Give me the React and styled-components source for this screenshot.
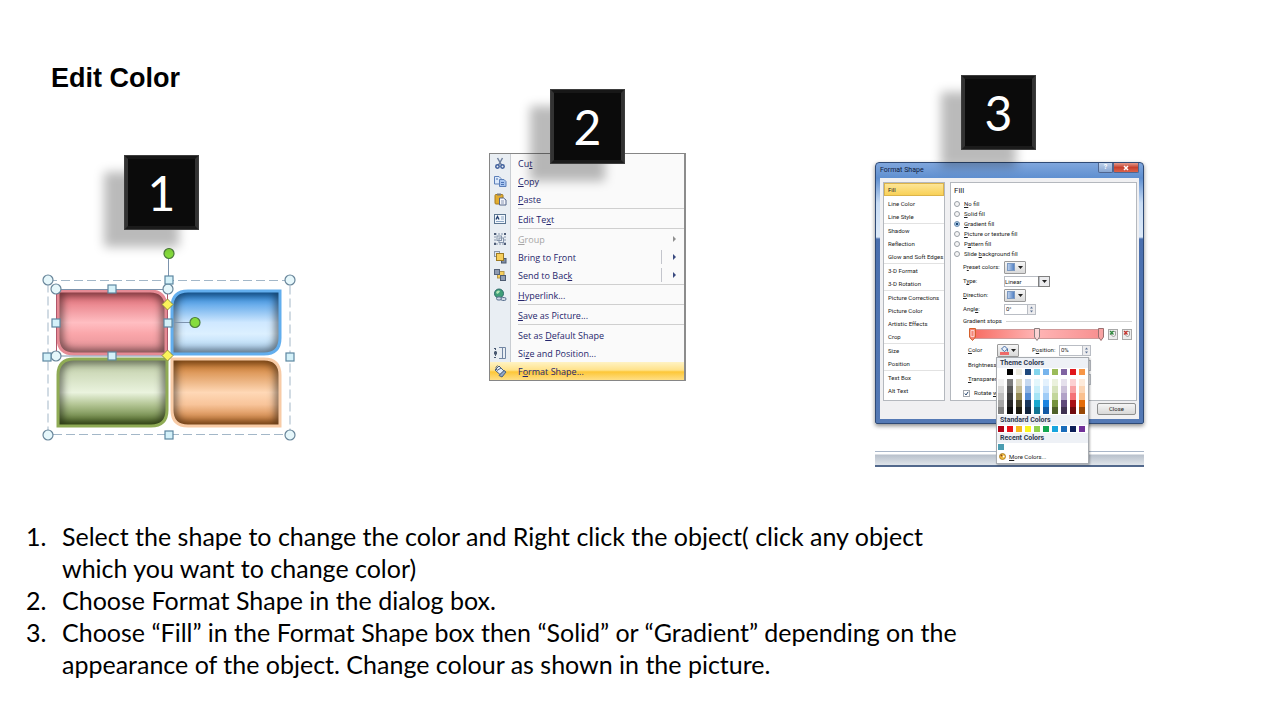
import React from 'react';
import styled, { createGlobalStyle } from 'styled-components';

const GlobalStyle = createGlobalStyle`
  * {
    box-sizing: border-box;
  }

  body {
    margin: 0;
    background: #fff;
    color: #000;
    font-family: Lato, 'Liberation Sans', sans-serif;
  }

  button, input, select {
    margin: 0;
    padding: 0;
    font: inherit;
    color: inherit;
  }

  svg {
    display: block;
    flex: none;
  }
`;

/* ---------- slide ---------- */

const Steps = styled.div`
  display: grid;
  grid-template-columns: 447fr 386fr 405fr;
  align-items: start;
  padding-left: 42px;
`;

const Step = styled.section`
  padding-top: ${({ $top }) => $top}px;
`;

const Title = styled.h1`
  margin: 0 0 61px 9px;
  font-family: 'Liberation Sans', Arial, sans-serif;
  font-size: 27px;
  line-height: 32px;
`;

const Badge = styled.div`
  position: relative;
  z-index: 1;
  display: flex;
  align-items: center;
  justify-content: center;
  width: 75px;
  height: 75px;
  margin: 0 0 ${({ $gap }) => $gap}px ${({ $indent }) => $indent}px;
  border: 4px solid;
  border-color: #171717 #333 #1b1b1b #333;
  outline: 1px solid #3d3d3d;
  outline-offset: -1px;
  background: #0b0b0b;
  box-shadow: -20px 17px 10px rgba(0, 0, 0, 0.27);
  color: #fff;
  font-size: 48px;
  line-height: 60px;
`;

const Instructions = styled.ol`
  max-width: 946px;
  margin: 53px 0 0 26px;
  padding: 0;
  list-style: none;
  counter-reset: step;
  font-size: 25px;
  line-height: 32px;
`;

const Instruction = styled.li`
  display: grid;
  grid-template-columns: 36px 1fr;
  counter-increment: step;

  &::before {
    content: counter(step) '.';
  }
`;

/* ---------- step 1: selected shapes ---------- */

const TILES = [
  {
    id: 'red',
    d: 'M58 291H150Q166 291 166 307V354H74Q58 354 58 338Z',
    border: '#e58a94',
    stops: ['#dd636d', '#ffbec2', '#faa6aa', '#e08f94'],
  },
  {
    id: 'blue',
    d: 'M188 291H280V338Q280 354 264 354H172V307Q172 291 188 291Z',
    border: '#62aeee',
    stops: ['#1c80dc', '#cfe8ff', '#dcf0ff', '#a8d0f2'],
  },
  {
    id: 'green',
    d: 'M74 359H167V410Q167 426 151 426H58V375Q58 359 74 359Z',
    border: '#8fab55',
    stops: ['#bccaa2', '#eaf3de', '#b3c594', '#4c691e'],
  },
  {
    id: 'orange',
    d: 'M172 359H264Q280 359 280 375V426H188Q172 426 172 410Z',
    border: '#f8cba6',
    stops: ['#c8701f', '#ffd8b6', '#f8c49a', '#c06a20'],
  },
];

const ROUND_HANDLES = [[48, 280], [290, 280], [48, 435], [290, 435], [56, 289], [168, 289], [56, 356]];
const SQUARE_HANDLES = [[169, 280], [112, 289], [56, 323], [168, 323], [47, 357], [290, 357], [112, 356], [169, 435]];

const SelectedShapes = () => (
  <svg width="256" height="196" viewBox="42 246 256 196" role="img" aria-label="Selected shapes">
    <defs>
      <filter id="soft" x="-20%" y="-20%" width="140%" height="140%">
        <feGaussianBlur stdDeviation="4.5" />
      </filter>
      {TILES.map(({ id, d, stops }) => (
        <React.Fragment key={id}>
          <linearGradient id={`fill-${id}`} x1="0" y1="0" x2="0" y2="1">
            <stop offset="0" stopColor={stops[0]} />
            <stop offset="0.5" stopColor={stops[1]} />
            <stop offset="0.68" stopColor={stops[2]} />
            <stop offset="1" stopColor={stops[3]} />
          </linearGradient>
          <clipPath id={`clip-${id}`}>
            <path d={d} />
          </clipPath>
        </React.Fragment>
      ))}
    </defs>
    {TILES.map(({ id, d, border }) => (
      <g key={id}>
        <path d={d} fill={`url(#fill-${id})`} />
        <g clipPath={`url(#clip-${id})`}>
          <path d={d} fill="none" stroke="#000" strokeOpacity="0.6" strokeWidth="8" filter="url(#soft)" />
        </g>
        <path d={d} fill="none" stroke={border} strokeWidth="3" />
      </g>
    ))}
    <rect x="48" y="280.5" width="242" height="154" fill="none" stroke="#a3b7c8" strokeDasharray="9 4" />
    <g fill="none" stroke="#7c93ad">
      <path d="M56.5 289.5H168M56.5 356H168M168.5 258V280M174 322.5H190" />
      <path d="M56.5 289V356M167.5 289V356" stroke="#b0566a" />
    </g>
    <g fill="#e6f7fb" stroke="#68859a" strokeWidth="1.2">
      {ROUND_HANDLES.map(([x, y]) => (
        <circle key={`${x}-${y}`} cx={x} cy={y} r="5" />
      ))}
    </g>
    <g fill="#d4f1f9" stroke="#5d87a1" strokeWidth="1.2">
      {SQUARE_HANDLES.map(([x, y]) => (
        <rect key={`${x}-${y}`} x={x - 4} y={y - 4} width="8" height="8" />
      ))}
    </g>
    <g fill="#fbf35a" stroke="#8c8c3c">
      <path d="M167.5 299L173 304.5L167.5 310L162 304.5Z" />
      <path d="M167.5 350L173 355.5L167.5 361L162 355.5Z" />
    </g>
    <g fill="#86dc3c" stroke="#4d7d3c" strokeWidth="1.2">
      <circle cx="169" cy="253.5" r="5" />
      <circle cx="195" cy="322.5" r="5" />
    </g>
  </svg>
);

/* ---------- step 2: context menu ---------- */

const Menu = styled.ul`
  width: 197px;
  margin: 0;
  padding: 0;
  list-style: none;
  border: 1px solid #868686;
  border-right: 2px solid #8c8c8c;
  background: linear-gradient(to right, #e9eef3 20px, #c9cdd2 20px, #c9cdd2 21px, #fafafa 21px);
  color: #26266c;
  font-family: 'Open Sans', sans-serif;
  font-size: 9px;
  font-weight: 500;
`;

const MenuSeparator = styled.li`
  height: 2px;
  margin-left: 28px;
  border-top: 1px solid #cfcfcf;
`;

const MenuButton = styled.button`
  display: grid;
  grid-template-columns: 21px 1fr 12px 11px;
  align-items: center;
  width: 100%;
  height: 18px;
  padding-left: 3px;
  border: 0;
  background: ${({ $active }) =>
    $active ? 'linear-gradient(#fff3c4, #ffe28a 45%, #fdc738 55%, #ffdf86)' : 'none'};
  color: ${({ disabled }) => (disabled ? '#a5a5a5' : 'inherit')};
  text-align: left;
  white-space: nowrap;
`;

const MenuLabel = styled.span`
  padding-left: 4px;
`;

const SplitLine = styled.span`
  width: 1px;
  height: 14px;
  background: ${({ $visible }) => ($visible ? '#c3c5cc' : 'transparent')};
`;

const MENU_ICONS = {
  cut: (
    <g fill="none" stroke="#3f5f9c" strokeWidth="1.5">
      <path d="M4.5 2L8.5 9M9.5 2L5.5 9" stroke="#6d7f9e" />
      <circle cx="4.5" cy="10.5" r="1.7" />
      <circle cx="9.5" cy="10.5" r="1.7" />
    </g>
  ),
  copy: (
    <g fill="#dbe9fb" stroke="#5b7fb9">
      <path d="M1.5 2.5H6L8 4.5V10H1.5Z" />
      <path d="M6.5 5.5H11L13 7.5V12.5H6.5Z" fill="#a9c6f0" />
      <path d="M8 8.5H11M8 10.5H11M3 5H5" stroke="#4b73b5" />
    </g>
  ),
  paste: (
    <g>
      <rect x="2" y="2.5" width="8" height="9.5" rx="1" fill="#e3ad2f" stroke="#a67c20" />
      <rect x="4" y="1.5" width="4" height="2" fill="#7d7d7d" />
      <path d="M6.5 6H10.5L13 8V13H6.5Z" fill="#f4f6fb" stroke="#55668a" />
      <path d="M8 9H11M8 11H11" stroke="#8a97b5" />
    </g>
  ),
  text: (
    <g>
      <rect x="1.5" y="2.5" width="11" height="9" fill="#f2f7fc" stroke="#5b7591" />
      <path d="M3 7.5L4.5 4.5L6 7.5" fill="none" stroke="#223f70" strokeWidth="1.4" />
      <path d="M8 5H11M8 7H11M3 9.5H11" fill="none" stroke="#8ba5c4" />
    </g>
  ),
  group: (
    <g fill="none" stroke="#8695ac">
      <rect x="2" y="2" width="10" height="10" strokeDasharray="2 1" />
      <rect x="4" y="4" width="4.5" height="4.5" />
      <rect x="6" y="6" width="4.5" height="4.5" />
      <path d="M1 2H3M11 2H13M1 12H3M11 12H13" stroke="#4f5e78" strokeWidth="2" />
    </g>
  ),
  front: (
    <g>
      <rect x="1.5" y="1.5" width="5" height="5" fill="#dfe6ef" stroke="#8b97a8" />
      <rect x="8.5" y="8.5" width="4.5" height="4.5" fill="#7f8ea6" stroke="#4c5a70" />
      <rect x="3.5" y="3.5" width="7" height="7" fill="#f7cf5c" stroke="#9c7a22" />
    </g>
  ),
  back: (
    <g>
      <rect x="4.5" y="3.5" width="6.5" height="6.5" fill="#f7cf5c" stroke="#b5964a" />
      <rect x="1.5" y="1.5" width="5" height="5" fill="#8f9bb0" stroke="#56647a" />
      <rect x="7.5" y="7.5" width="5" height="5" fill="#8f9db4" stroke="#4c5a70" />
    </g>
  ),
  link: (
    <g>
      <circle cx="6" cy="5.5" r="4.5" fill="#3f9e78" stroke="#2c6c6b" />
      <path d="M3 4Q5 1.5 7 3Q6 6 4 6Z" fill="#b3e6b6" />
      <rect x="3.5" y="9" width="5" height="3" rx="1.5" fill="#cfd9e6" stroke="#5d7391" />
      <rect x="8" y="9.5" width="5" height="3" rx="1.5" fill="#cfd9e6" stroke="#5d7391" />
    </g>
  ),
  size: (
    <g fill="none" stroke="#4a5a72">
      <path d="M2.5 2V12M1 2.5H4M1 11.5H4" strokeDasharray="2 1" />
      <rect x="1.5" y="6" width="2" height="2" />
      <path d="M6 1.5H12.5V12.5H6M9.5 2V12" stroke="#7286a3" />
    </g>
  ),
  fill: (
    <g stroke="#4c607f">
      <path d="M2 6L6 2L11 7L7 10.5Z" fill="#e4ecf6" />
      <path d="M3.5 6Q2 3 4.5 1.5" fill="none" />
      <path d="M6 11.5L11 6.5L13 8L9 13Z" fill="#8fa6c9" />
      <path d="M4 6.5L8 4" fill="none" />
    </g>
  ),
};

const MENU_ITEMS = [
  { before: 'Cu', key: 't', icon: 'cut' },
  { key: 'C', after: 'opy', icon: 'copy' },
  { key: 'P', after: 'aste', icon: 'paste', divide: true },
  { before: 'Edit Te', key: 'x', after: 't', icon: 'text', divide: true },
  { key: 'G', after: 'roup', icon: 'group', disabled: true, arrow: true },
  { before: 'Bring to F', key: 'r', after: 'ont', icon: 'front', arrow: true, split: true },
  { before: 'Send to Bac', key: 'k', icon: 'back', arrow: true, split: true, divide: true },
  { key: 'H', after: 'yperlink...', icon: 'link', divide: true },
  { key: 'S', after: 'ave as Picture...', divide: true },
  { before: 'Set as ', key: 'D', after: 'efault Shape' },
  { before: 'Si', key: 'z', after: 'e and Position...', icon: 'size' },
  { before: 'F', key: 'o', after: 'rmat Shape...', icon: 'fill', active: true },
];

const ContextMenu = () => (
  <Menu>
    {MENU_ITEMS.map((item) => (
      <React.Fragment key={item.key + (item.after || item.before)}>
        <li>
          <MenuButton type="button" disabled={item.disabled} $active={item.active}>
            <svg width="14" height="14" viewBox="0 0 14 14">
              {MENU_ICONS[item.icon]}
            </svg>
            <MenuLabel>
              {item.before}
              <u>{item.key}</u>
              {item.after}
            </MenuLabel>
            <SplitLine $visible={item.split} />
            {item.arrow && (
              <svg width="3" height="6" viewBox="0 0 3 6">
                <path d="M0 0L3 3L0 6Z" fill={item.disabled ? '#8f8f8f' : '#3a4a80'} />
              </svg>
            )}
          </MenuButton>
        </li>
        {item.divide && <MenuSeparator role="separator" />}
      </React.Fragment>
    ))}
  </Menu>
);

/* ---------- step 3: Format Shape dialog ---------- */

const Screen = styled.div`
  width: 269px;
  color: #222;
  font-family: Roboto, 'Open Sans', sans-serif;
  font-size: 6px;
  line-height: 10px;
  white-space: nowrap;
`;

const Dialog = styled.div`
  padding: 0 4px 4px;
  border: 1px solid #2f4a75;
  border-radius: 4px 4px 2px 2px;
  background: linear-gradient(#7fa6dc, #5f8fd0 15px, #c8dcf4 40px, #dce9f8 74px, #4a6fae 76px, #5479b5);
  box-shadow: 0 2px 4px rgba(0, 0, 0, 0.45);
`;

const TitleBar = styled.header`
  display: flex;
  align-items: flex-start;
  justify-content: space-between;
  height: 15px;
  color: #10203c;
  font-size: 7px;
  line-height: 15px;
`;

const WindowButtons = styled.div`
  display: flex;
`;

const WindowButton = styled.button`
  display: flex;
  align-items: center;
  justify-content: center;
  width: ${({ $danger }) => ($danger ? 26 : 15)}px;
  height: 10px;
  border: 1px solid #4f6690;
  border-top: 0;
  border-radius: 0 0 2px 2px;
  background: ${({ $danger }) =>
    $danger ? 'linear-gradient(#e39a8c, #c8402c 50%, #d9634c)' : 'linear-gradient(#bfd1ea, #88a6d2)'};
  color: #fff;
  font-size: 7px;
  font-weight: bold;
  line-height: 9px;
`;

const Content = styled.div`
  display: grid;
  grid-template-columns: 62px 1fr;
  column-gap: 5px;
  padding: 4px 3px 0;
  background: #f0f0f2;
`;

const Nav = styled.nav`
  border: 1px solid #b4b8be;
  background: #fff;
`;

const NavGroup = styled.div`
  & + & {
    border-top: 1px solid #e2e2e2;
  }
`;

const NavLink = styled.a`
  display: block;
  height: 13px;
  margin-bottom: ${({ $current }) => ($current ? 1 : 0)}px;
  padding-left: 4px;
  background: ${({ $current }) => ($current ? 'linear-gradient(#fde79c, #f8cf52)' : 'none')};
  box-shadow: ${({ $current }) => ($current ? 'inset 0 0 0 1px #dcb44a' : 'none')};
  color: inherit;
  line-height: 13px;
  text-decoration: none;
`;

const Panel = styled.form`
  padding: 0 4px 0 3px;
  border: 1px solid #b4b8be;
  background: #fff;
`;

const PanelTitle = styled.h2`
  margin: 0;
  font-size: 8px;
  font-weight: normal;
  line-height: 16px;
`;

const Choice = styled.label`
  display: flex;
  align-items: center;
  gap: 4px;
  height: 10px;
`;

const Radio = styled.input`
  appearance: none;
  width: 6px;
  height: 6px;
  border: 1px solid #9a9fa6;
  border-radius: 50%;
  background: #f4f4f4;

  &:checked {
    border-color: #6c8db0;
    background: radial-gradient(#1c4878 45%, #a8c8e4 50%);
  }
`;

const Fields = styled.div`
  margin: 1px 0 0 9px;
`;

const Field = styled.div`
  display: grid;
  grid-template-columns: ${({ $label }) => $label || 41}px auto;
  justify-content: start;
  align-items: center;
  height: 14px;
`;

const PickerButton = styled.button`
  display: flex;
  align-items: center;
  justify-content: space-evenly;
  width: 22px;
  height: 13px;
  border: 1px solid #9a9a9a;
  border-radius: 1px;
  background: linear-gradient(#f6f6f6, #d9d9d9);
`;

const Control = styled.span`
  display: flex;
  width: ${({ $width }) => $width}px;
  height: 11px;
  border: 1px solid #b9bdc4;
  background: #fff;
`;

const TypeSelect = styled.select`
  appearance: none;
  flex: 1;
  min-width: 0;
  border: 0;
  background: none;
  line-height: 9px;
`;

const NumberBox = styled.input`
  flex: 1;
  min-width: 0;
  height: 9px;
  padding-left: 1px;
  border: 0;
  background: none;
`;

const ControlEnd = styled.span`
  display: flex;
  align-items: center;
  justify-content: center;
  width: ${({ $strong }) => ($strong ? 10 : 8)}px;
  border-left: 1px solid #b9bdc4;
  outline: ${({ $strong }) => ($strong ? '1px solid #7f7f7f' : 'none')};
  background: #ececee;
`;

const Legend = styled.div`
  display: flex;
  align-items: center;
  gap: 4px;
  height: 10px;
  margin-left: 9px;

  &::after {
    content: '';
    flex: 1;
    height: 1px;
    background: #d4d4d4;
  }
`;

const StopsRow = styled.div`
  display: flex;
  align-items: center;
  gap: 4px;
  height: 16px;
  margin-left: 14px;
`;

const StopButton = styled.button`
  display: flex;
  align-items: center;
  justify-content: center;
  width: 10px;
  height: 11px;
  border: 1px solid #a9a9a9;
  background: #ececec;
`;

const ColorRow = styled.div`
  display: flex;
  align-items: center;
  height: 16px;
  margin-left: 14px;
`;

const ColorLabel = styled.span`
  width: 29px;
`;

const ColorPicker = styled.div`
  position: relative;
`;

const PositionField = styled.label`
  display: grid;
  grid-template-columns: 27px auto;
  align-items: center;
  margin-left: 13px;
`;

const Sliders = styled.div`
  margin-left: 14px;
`;

const RotateChoice = styled(Choice)`
  height: 14px;
  margin-left: 9px;
`;

const TickBox = styled.span`
  display: grid;
  width: 7px;
  height: 7px;

  & > * {
    grid-area: 1 / 1;
  }
`;

const Tick = styled.input`
  appearance: none;
  width: 7px;
  height: 7px;
  border: 1px solid #a3a8ae;
  background: #fff;
`;

const Footer = styled.footer`
  display: flex;
  justify-content: flex-end;
  grid-column: 1 / -1;
  height: 18px;
  padding: 2px 1px 4px 0;
`;

const CloseButton = styled.button`
  width: 39px;
  border: 1px solid #8e8f8f;
  border-radius: 2px;
  background: linear-gradient(#f5f5f5, #d8d8d8);
`;

const Palette = styled.div`
  position: absolute;
  top: 100%;
  left: -1px;
  width: 93px;
  border: 1px solid #a7abb0;
  background: #fff;
  box-shadow: 1px 1px 2px rgba(0, 0, 0, 0.3);
`;

const PaletteTitle = styled.h3`
  margin: 0;
  padding-left: 3px;
  background: #eef1f6;
  color: #2f3a50;
  font-size: 7px;
  line-height: 10px;
`;

const Swatches = styled.div`
  display: grid;
  grid-template-columns: repeat(10, 6px);
  gap: 4px 3px;
  padding: 1px;
`;

const Swatch = styled.button`
  height: 6px;
  border: 0;
  background: ${({ $color }) => $color};
`;

const Shades = styled.div`
  display: grid;
  grid-template-rows: repeat(5, 7px);
`;

const Shade = styled.span`
  background: ${({ $color }) => $color};
`;

const MoreColors = styled.button`
  display: flex;
  align-items: center;
  gap: 3px;
  height: 12px;
  padding-left: 2px;
  border: 0;
  background: none;
`;

const TaskBar = styled.div`
  height: 16px;
  margin-top: 27px;
  border-top: 1px solid #a9b6c8;
  border-bottom: 2px solid #52688c;
  background: linear-gradient(#fff 2px, #b9c1cc 3px, #dfe4ea);
`;

const NAV = [
  ['Fill', 'Line Color', 'Line Style'],
  ['Shadow', 'Reflection', 'Glow and Soft Edges'],
  ['3-D Format', '3-D Rotation'],
  ['Picture Corrections', 'Picture Color', 'Artistic Effects', 'Crop'],
  ['Size', 'Position'],
  ['Text Box', 'Alt Text'],
];

const FILLS = [
  ['', 'N', 'o fill'],
  ['', 'S', 'olid fill'],
  ['', 'G', 'radient fill'],
  ['', 'P', 'icture or texture fill'],
  ['P', 'a', 'ttern fill'],
  ['Slide ', 'b', 'ackground fill'],
];

const THEME = [
  ['#ffffff', '#f2f2f2', '#d8d8d8', '#bfbfbf', '#a5a5a5', '#7f7f7f'],
  ['#000000', '#7f7f7f', '#595959', '#3f3f3f', '#262626', '#0c0c0c'],
  ['#eeece1', '#ddd9c3', '#c4bd97', '#938953', '#494429', '#1d1b10'],
  ['#1f497d', '#c6d9f0', '#8db3e2', '#548dd4', '#17365d', '#0f243e'],
  ['#84d5ec', '#e3f7fc', '#c8effa', '#a4e4f5', '#19a9cf', '#117594'],
  ['#77b4ec', '#e4f1fd', '#c9e2fb', '#9fccf7', '#1d84e0', '#1259a4'],
  ['#9bbb59', '#ebf1dd', '#d7e3bc', '#c3d69b', '#76923c', '#4f6128'],
  ['#8064a2', '#e5e0ec', '#ccc1d9', '#b2a2c7', '#5f497a', '#3f3151'],
  ['#e0161c', '#fcd0d2', '#f9a1a4', '#f47277', '#a81116', '#700b0f'],
  ['#f79646', '#fdeada', '#fbd5b5', '#fac08f', '#e36c09', '#974806'],
];

const STANDARD = [
  '#b00014', '#e8121a', '#f6b91e', '#fbf520', '#92d050',
  '#12a650', '#18a5de', '#1a6cba', '#0c1e58', '#703098',
];

const Caret = () => (
  <svg width="5" height="3" viewBox="0 0 5 3">
    <path d="M0 0H5L2.5 3Z" fill="#222" />
  </svg>
);

const Picker = ({ id }) => (
  <PickerButton type="button" id={id}>
    <svg width="8" height="8" viewBox="0 0 8 8">
      <defs>
        <linearGradient id={`${id}-blue`}>
          <stop stopColor="#c3d6f0" />
          <stop offset="1" stopColor="#4a7abf" />
        </linearGradient>
      </defs>
      <rect x="0.5" y="0.5" width="7" height="7" fill={`url(#${id}-blue)`} stroke="#7d9ac2" />
    </svg>
    <Caret />
  </PickerButton>
);

const Spinner = ({ id, value }) => (
  <Control $width={32}>
    <NumberBox type="text" id={id} defaultValue={value} />
    <ControlEnd>
      <svg width="5" height="7" viewBox="0 0 5 7">
        <path d="M1 2.5L2.5 0.5L4 2.5ZM1 4.5L2.5 6.5L4 4.5Z" fill="#5f7394" />
      </svg>
    </ControlEnd>
  </Control>
);

const StopIcon = ({ color }) => (
  <svg width="8" height="8" viewBox="0 0 8 8">
    <path d="M2.5 1.5H6.5V5L4.5 7L2.5 5Z" fill="#f3f3f3" stroke="#888" strokeWidth="0.8" />
    <path d="M1 1L4.5 4.5M4.5 1L1 4.5" stroke={color} strokeWidth="1.2" />
  </svg>
);

const GradientStops = () => (
  <svg width="136" height="15" viewBox="0 0 136 15">
    <defs>
      <linearGradient id="stops">
        <stop stopColor="#f6695f" />
        <stop offset="0.5" stopColor="#ffb5b5" />
        <stop offset="1" stopColor="#f78f8f" />
      </linearGradient>
    </defs>
    <rect x="2.5" y="2.5" width="131" height="9" fill="url(#stops)" stroke="#cf9a9a" />
    <path d="M1.5 1.5H7.5V10L4.5 13.5L1.5 10Z" fill="#f58678" stroke="#d4602c" />
    <path d="M3 3.5H6V9.5H3Z" fill="none" stroke="#fff" strokeOpacity="0.6" />
    <path d="M66.5 1.5H71.5V10L69 13.5L66.5 10Z" fill="#fbd4d4" stroke="#8a8080" />
    <path d="M130.5 1.5H135.5V10L133 13.5L130.5 10Z" fill="#f9a3a3" stroke="#9a7070" />
  </svg>
);

const ColorPalette = () => (
  <Palette>
    <PaletteTitle>Theme Colors</PaletteTitle>
    <Swatches>
      {THEME.map(([color]) => (
        <Swatch key={color} type="button" $color={color} aria-label={color} />
      ))}
      {THEME.map(([base, ...shades]) => (
        <Shades key={base}>
          {shades.map((shade) => (
            <Shade key={shade} $color={shade} />
          ))}
        </Shades>
      ))}
    </Swatches>
    <PaletteTitle>Standard Colors</PaletteTitle>
    <Swatches>
      {STANDARD.map((color) => (
        <Swatch key={color} type="button" $color={color} aria-label={color} />
      ))}
    </Swatches>
    <PaletteTitle>Recent Colors</PaletteTitle>
    <Swatches>
      <Swatch type="button" $color="#4b9db1" aria-label="#4b9db1" />
    </Swatches>
    <MoreColors type="button">
      <svg width="7" height="7" viewBox="0 0 7 7">
        <circle cx="3.5" cy="3.5" r="3" fill="#f0b93a" stroke="#a3761c" strokeWidth="0.8" />
        <circle cx="2.5" cy="2.5" r="0.9" fill="#8a4a1c" />
        <circle cx="4.7" cy="3.5" r="0.9" fill="#fff" />
      </svg>
      <span>
        <u>M</u>ore Colors...
      </span>
    </MoreColors>
  </Palette>
);

const FormatShape = () => (
  <Screen>
    <Dialog>
      <TitleBar>
        <span>Format Shape</span>
        <WindowButtons>
          <WindowButton type="button">?</WindowButton>
          <WindowButton type="button" $danger aria-label="Close window">
            <svg width="6" height="6" viewBox="0 0 6 6">
              <path d="M1 1L5 5M5 1L1 5" stroke="#fff" strokeWidth="1.5" />
            </svg>
          </WindowButton>
        </WindowButtons>
      </TitleBar>
      <Content>
        <Nav>
          {NAV.map((group) => (
            <NavGroup key={group[0]}>
              {group.map((name) => (
                <NavLink key={name} href="#" $current={name === 'Fill'}>
                  {name}
                </NavLink>
              ))}
            </NavGroup>
          ))}
        </Nav>
        <Panel>
          <PanelTitle>Fill</PanelTitle>
          {FILLS.map(([before, key, after]) => (
            <Choice key={after}>
              <Radio type="radio" name="fill" defaultChecked={key === 'G'} />
              <span>
                {before}
                <u>{key}</u>
                {after}
              </span>
            </Choice>
          ))}
          <Fields>
            <Field>
              <label htmlFor="preset">P<u>r</u>eset colors:</label>
              <Picker id="preset" />
            </Field>
            <Field>
              <label htmlFor="type">T<u>y</u>pe:</label>
              <Control $width={46}>
                <TypeSelect id="type">
                  <option>Linear</option>
                </TypeSelect>
                <ControlEnd $strong>
                  <Caret />
                </ControlEnd>
              </Control>
            </Field>
            <Field>
              <label htmlFor="direction"><u>D</u>irection:</label>
              <Picker id="direction" />
            </Field>
            <Field>
              <label htmlFor="angle">Angl<u>e</u>:</label>
              <Spinner id="angle" value="0°" />
            </Field>
          </Fields>
          <Legend>Gradient stops</Legend>
          <StopsRow>
            <GradientStops />
            <StopButton type="button" aria-label="Add gradient stop">
              <StopIcon color="#2f8a3c" />
            </StopButton>
            <StopButton type="button" aria-label="Remove gradient stop">
              <StopIcon color="#c8322c" />
            </StopButton>
          </StopsRow>
          <ColorRow>
            <ColorLabel><u>C</u>olor</ColorLabel>
            <ColorPicker>
              <PickerButton type="button" aria-label="Color">
                <svg width="9" height="10" viewBox="0 0 9 10">
                  <path d="M1.5 4L4.5 1L7.5 4L4.5 6.5Z" fill="#e8eff8" stroke="#4a6fa8" />
                  <path d="M7.5 4V6.5" stroke="#4a6fa8" />
                  <rect y="7" width="9" height="3" fill="#ee6a6a" />
                </svg>
                <Caret />
              </PickerButton>
              <ColorPalette />
            </ColorPicker>
            <PositionField>
              <span>P<u>o</u>sition:</span>
              <Spinner value="0%" />
            </PositionField>
          </ColorRow>
          <Sliders>
            <Field $label={91}>
              <label htmlFor="brightness">Brightness:</label>
              <Spinner id="brightness" value="0%" />
            </Field>
            <Field $label={91}>
              <label htmlFor="transparency"><u>T</u>ransparency:</label>
              <Spinner id="transparency" value="0%" />
            </Field>
          </Sliders>
          <RotateChoice>
            <TickBox>
              <Tick type="checkbox" defaultChecked />
              <svg width="7" height="7" viewBox="0 0 7 7">
                <path d="M1.8 3.5L3 5L5.2 1.8" fill="none" stroke="#27476f" />
              </svg>
            </TickBox>
            <span>Rotate <u>w</u>ith shape</span>
          </RotateChoice>
        </Panel>
        <Footer>
          <CloseButton type="button">Close</CloseButton>
        </Footer>
      </Content>
    </Dialog>
    <TaskBar />
  </Screen>
);

const App = () => (
  <main>
    <GlobalStyle />
    <Steps>
      <Step $top={62}>
        <Title>Edit Color</Title>
        <Badge $indent={82} $gap={16}>1</Badge>
        <SelectedShapes />
      </Step>
      <Step $top={89}>
        <Badge $indent={61} $gap={-11}>2</Badge>
        <ContextMenu />
      </Step>
      <Step $top={75}>
        <Badge $indent={86} $gap={12}>3</Badge>
        <FormatShape />
      </Step>
    </Steps>
    <Instructions>
      <Instruction>
        Select the shape to change the color and Right click the object( click any object which you
        want to change color)
      </Instruction>
      <Instruction>Choose Format Shape in the dialog box.</Instruction>
      <Instruction>
        Choose “Fill” in the Format Shape box then “Solid” or “Gradient” depending on the
        appearance of the object. Change colour as shown in the picture.
      </Instruction>
    </Instructions>
  </main>
);

export default App;
